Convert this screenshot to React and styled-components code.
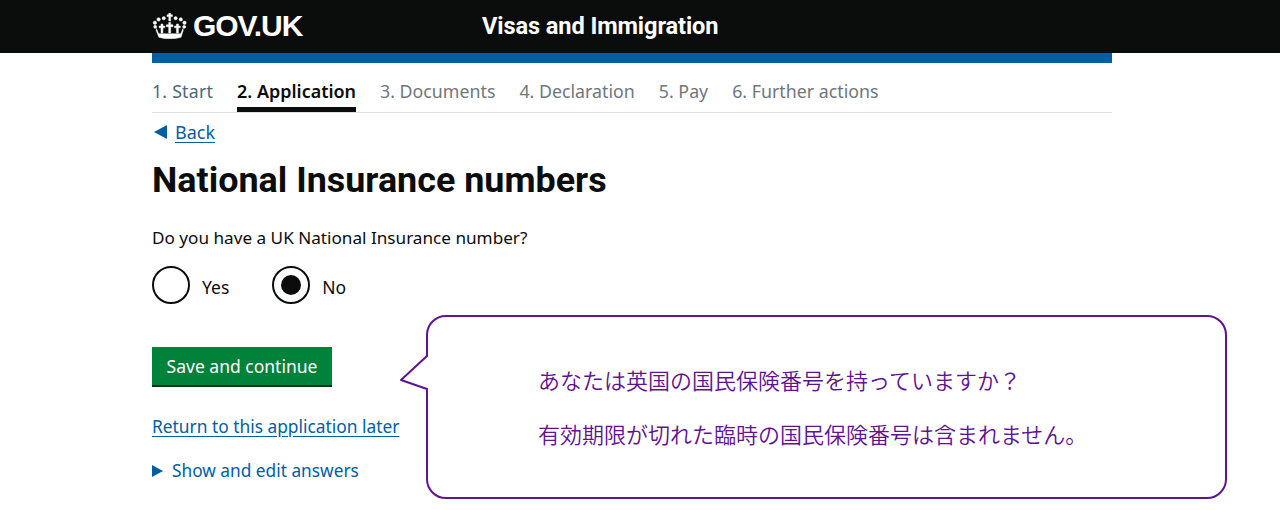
import React from 'react';
import styled, { createGlobalStyle } from 'styled-components';

const GlobalStyle = createGlobalStyle`
  html, body { margin: 0; padding: 0; background: #fff; }
  body {
    font-family: "Noto Sans", "Noto Sans CJK JP", sans-serif;
    color: #0b0c0c;
  }
`;

const Page = styled.div`
  position: relative;
  width: 1280px;
  height: 510px;
  overflow: hidden;
`;

const Header = styled.header`
  box-sizing: border-box;
  background: #0b0c0c;
  height: 53px;
  padding: 0 0 2px 152px;
  display: flex;
  align-items: center;
`;

const Logo = styled.div`
  display: flex;
  align-items: center;
  gap: 6px;
  width: 330px;
  color: #fff;
  font-family: "Liberation Sans", sans-serif;
  font-weight: 700;
  font-size: 30px;
  letter-spacing: -1.05px;
`;

const ServiceName = styled.div`
  color: #fff;
  font-family: "Roboto", sans-serif;
  font-weight: 700;
  font-size: 23.6px;
  letter-spacing: -0.1px;
`;

const Main = styled.main`
  width: 960px;
  margin-left: 152px;
`;

const BlueBar = styled.div`
  height: 10px;
  background: #005ea5;
`;

const Steps = styled.nav`
  display: flex;
  gap: 24px;
  height: 49px;
  border-bottom: 1px solid #dee0e2;
`;

const Step = styled.span`
  box-sizing: border-box;
  padding-top: 15px;
  height: 49px;
  color: ${p => p.$done ? '#4b6a7a' : p.$active ? '#0b0c0c' : '#6f777b'};
  font-size: ${p => p.$active ? '17.95px' : '17.8px'};
  letter-spacing: ${p => p.$done ? '0.2px' : 'normal'};
  font-weight: ${p => p.$active ? 600 : 400};
  border-bottom: ${p => p.$active ? '5px solid #0b0c0c' : 'none'};
  line-height: 26px;
`;

const BackRow = styled.div`
  display: flex;
  align-items: center;
  gap: 8px;
  height: 38px;
  font-size: 18px;
`;

const BackArrow = styled.span`
  width: 0;
  height: 0;
  margin-left: 2px;
  border-style: solid;
  border-width: 7px 13px 7px 0;
  border-color: transparent #005ea5 transparent transparent;
`;

const Link = styled.a`
  color: #005ea5;
  text-decoration: underline;
  text-underline-offset: 3px;
`;

const Title = styled.h1`
  margin: 7px 0 0;
  font-family: "Roboto", sans-serif;
  font-size: 35.9px;
  line-height: 44px;
  font-weight: 700;
`;

const Question = styled.p`
  margin: 23px 0 0;
  font-size: 17.15px;
  line-height: 26px;
`;

const RadioRow = styled.div`
  display: flex;
  gap: 43px;
  margin-top: 15px;
`;

const RadioOption = styled.label`
  display: flex;
  align-items: center;
  gap: 12px;
  font-size: 17.5px;
`;

const RadioText = styled.span`
  padding-top: 3px;
`;

const RadioCircle = styled.span`
  width: 34px;
  height: 34px;
  border: 2px solid #0b0c0c;
  border-radius: 50%;
  display: flex;
  align-items: center;
  justify-content: center;
  background: #fff;
  &::after {
    content: '';
    display: ${p => p.$checked ? 'block' : 'none'};
    width: 20px;
    height: 20px;
    border-radius: 50%;
    background: #0b0c0c;
  }
`;

const SaveButton = styled.button`
  display: block;
  margin-top: 43px;
  width: 180px;
  height: 40px;
  padding: 0;
  border: 0;
  border-bottom: 2px solid #003618;
  background: #00823b;
  color: #fff;
  font-family: inherit;
  font-size: 17.5px;
`;

const ReturnRow = styled.div`
  margin-top: 25px;
  font-size: 17.35px;
  line-height: 28px;
`;

const DetailsRow = styled.div`
  display: flex;
  align-items: center;
  gap: 9px;
  margin-top: 17px;
  font-size: 17.3px;
  line-height: 28px;
  color: #005ea5;
`;

const DetailsArrow = styled.span`
  width: 0;
  height: 0;
  border-style: solid;
  border-width: 6px 0 6px 11px;
  border-color: transparent transparent transparent #005ea5;
`;

const Callout = styled.aside`
  position: absolute;
  left: 400px;
  top: 315px;
  width: 828px;
  height: 184px;
`;

const CalloutShape = styled.svg`
  position: absolute;
  inset: 0;
`;

const CalloutText = styled.div`
  position: relative;
  padding: 36.5px 0 0 138px;
  color: #5f1390;
  font-family: "Noto Sans CJK JP", sans-serif;
  font-weight: 350;
  font-size: 22px;
  line-height: 54px;
`;

const STEPS = ['1. Start', '2. Application', '3. Documents', '4. Declaration', '5. Pay', '6. Further actions'];

function Crown() {
  return (
    <svg width="35" height="26" viewBox="-1 0 35 26" fill="#fff" stroke="#fff" strokeWidth="0.5" aria-hidden="true">
      <path d="M15.800 0h1.800v1.800h1.800v1.800h-1.800V8h-1.800V3.600H14V1.800h1.800z" />
      <circle cx="10.800" cy="5.200" r="1.600" />
      <circle cx="22.600" cy="5.200" r="1.600" />
      <circle cx="5.600" cy="6.400" r="1.700" />
      <circle cx="27.800" cy="6.400" r="1.700" />
      <circle cx="1.900" cy="9.800" r="1.700" />
      <circle cx="31.500" cy="9.800" r="1.700" />
      <circle cx="2.200" cy="13.800" r="1.500" />
      <circle cx="31.200" cy="13.800" r="1.500" />
      <path d="M15.700 9.500h2v2.300H20v1.900h-2.300V20h-2v-6.300h-2.300v-1.900h2.300z" />
      <path d="M8 11h1.900v2h1.900v1.800H9.900V20H8v-5.200H6.100V13H8zM23.500 11h1.900v2h1.900v1.800h-1.900V20h-1.900v-5.200h-1.900V13h1.900z" />
      <path d="M3.400 15.500l2.300 5.300h22l2.300-5.300.2 2-2.200 6.800Q16.700 27.400 5.900 24.300L3.200 17.500z" />
    </svg>
  );
}

function App() {
  return (
    <Page>
      <GlobalStyle />
      <Header>
        <Logo><Crown />GOV.UK</Logo>
        <ServiceName>Visas and Immigration</ServiceName>
      </Header>
      <Main>
        <BlueBar />
        <Steps>
          {STEPS.map((s, i) => (
            <Step key={s} $done={i === 0} $active={i === 1}>{s}</Step>
          ))}
        </Steps>
        <BackRow><BackArrow /><Link>Back</Link></BackRow>
        <Title>National Insurance numbers</Title>
        <Question>Do you have a UK National Insurance number?</Question>
        <RadioRow>
          <RadioOption><RadioCircle /><RadioText>Yes</RadioText></RadioOption>
          <RadioOption><RadioCircle $checked /><RadioText>No</RadioText></RadioOption>
        </RadioRow>
        <SaveButton>Save and continue</SaveButton>
        <ReturnRow><Link>Return to this application later</Link></ReturnRow>
        <DetailsRow><DetailsArrow />Show and edit answers</DetailsRow>
      </Main>
      <Callout>
        <CalloutShape width="828" height="184" viewBox="0 0 828 184" fill="none">
          <path
            d="M46 1H807a19 19 0 0 1 19 19V164a19 19 0 0 1-19 19H46a19 19 0 0 1-19-19V74L1 65 27 41V20A19 19 0 0 1 46 1z"
            fill="#fff"
            stroke="#5f1390"
            strokeWidth="2"
            strokeLinejoin="round"
          />
        </CalloutShape>
        <CalloutText>
          <div>あなたは英国の国民保険番号を持っていますか？</div>
          <div>有効期限が切れた臨時の国民保険番号は含まれません。</div>
        </CalloutText>
      </Callout>
    </Page>
  );
}

export default App;
